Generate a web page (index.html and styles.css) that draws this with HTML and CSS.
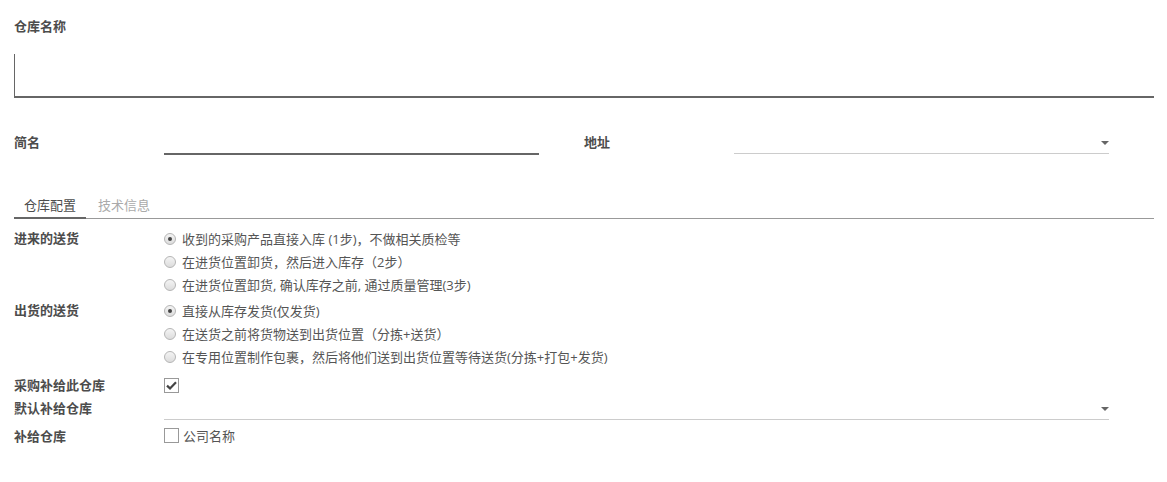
FILE: index.html
```html
<!DOCTYPE html>
<html lang="zh-CN">
<head>
    <meta charset="UTF-8">
    <title>仓库</title>
    <link rel="stylesheet" href="styles.css">
</head>
<body>
    <div class="sheet">
        <div class="title-label">仓库名称</div>
        <div class="title-input"></div>

        <div class="pair-row">
            <div class="pair">
                <div class="label">简名</div>
                <div class="field field-dark"></div>
            </div>
            <div class="pair">
                <div class="label">地址</div>
                <div class="field field-select"><span class="caret"></span></div>
            </div>
        </div>

        <div class="tabs">
            <div class="tab active">仓库配置</div>
            <div class="tab">技术信息</div>
        </div>

        <div class="group incoming">
            <div class="label">进来的送货</div>
            <div class="options">
                <div class="option"><span class="radio checked"></span>收到的采购产品直接入库 (1步)，不做相关质检等</div>
                <div class="option"><span class="radio"></span>在进货位置卸货，然后进入库存（2步）</div>
                <div class="option"><span class="radio"></span>在进货位置卸货, 确认库存之前, 通过质量管理(3步)</div>
            </div>
        </div>

        <div class="group outgoing">
            <div class="label">出货的送货</div>
            <div class="options">
                <div class="option"><span class="radio checked"></span>直接从库存发货(仅发货)</div>
                <div class="option"><span class="radio"></span>在送货之前将货物送到出货位置（分拣+送货）</div>
                <div class="option"><span class="radio"></span>在专用位置制作包裹，然后将他们送到出货位置等待送货(分拣+打包+发货)</div>
            </div>
        </div>

        <div class="group check-row buy-row">
            <div class="label">采购补给此仓库</div>
            <div class="options">
                <span class="checkbox">
                    <svg width="11" height="9" viewBox="0 0 11 9"><path d="M1 4.6 L4 7.4 L10 1.2" fill="none" stroke="#444" stroke-width="2.2"/></svg>
                </span>
            </div>
        </div>

        <div class="label default-label">默认补给仓库</div>
        <div class="group default-row">
            <div class="field field-select wide"><span class="caret"></span></div>
        </div>

        <div class="group check-row resupply-row">
            <div class="label">补给仓库</div>
            <div class="options"><span class="checkbox"></span>公司名称</div>
        </div>
    </div>
</body>
</html>
```

FILE: styles.css
```css
body {
    margin: 0;
    font-family: "Open Sans", "Noto Sans CJK SC", sans-serif;
    font-size: 13px;
    color: #4c4c4c;
    background: #ffffff;
}
.sheet {
    width: 1140px;
    padding: 17px 0 0 14px;
}
.title-label {
    font-weight: bold;
    line-height: 18px;
}
.title-input {
    margin-top: 19px;
    height: 42px;
    border-left: 1px solid #666666;
    border-bottom: 2px solid #666666;
}
.label {
    font-weight: bold;
    width: 150px;
    flex-shrink: 0;
    line-height: 18px;
}
.pair-row {
    display: flex;
    gap: 45px;
    margin-top: 35px;
}
.pair {
    display: flex;
}
.field {
    width: 375px;
    height: 20px;
    position: relative;
}
.field-dark {
    border-bottom: 2px solid #666666;
}
.field-select {
    border-bottom: 1px solid #cccccc;
}
.caret {
    position: absolute;
    right: 0;
    top: 8px;
    width: 0;
    height: 0;
    border-left: 4px solid transparent;
    border-right: 4px solid transparent;
    border-top: 4px solid #666666;
}
.tabs {
    display: flex;
    margin-top: 41px;
    border-bottom: 1px solid #999999;
}
.tab {
    padding: 0 10px 3px;
    line-height: 18px;
    color: #aaaaaa;
}
.tab.active {
    color: #4c4c4c;
    border-bottom: 2px solid #666666;
    margin-bottom: -1px;
}
.tab + .tab {
    padding-left: 12px;
}
.group {
    display: flex;
}
.incoming {
    margin-top: 10px;
}
.outgoing {
    margin-top: 5px;
}
.options {
    display: flex;
    flex-direction: column;
    color: #555555;
}
.option {
    display: flex;
    align-items: center;
    height: 23px;
    line-height: 18px;
}
.option:first-child {
    margin-top: -2px;
}
.radio {
    width: 12px;
    height: 12px;
    box-sizing: border-box;
    border: 1px solid #b5b5b5;
    border-radius: 50%;
    background: linear-gradient(#f4f4f4, #dcdcdc);
    margin-right: 6px;
    position: relative;
}
.radio.checked::after {
    content: "";
    position: absolute;
    left: 3px;
    top: 3px;
    width: 4px;
    height: 4px;
    border-radius: 50%;
    background: #444444;
}
.check-row {
    align-items: center;
}
.check-row .options {
    flex-direction: row;
    align-items: center;
}
.buy-row {
    margin-top: 8px;
}
.resupply-row {
    margin-top: 6px;
}
.checkbox {
    width: 15px;
    height: 15px;
    box-sizing: border-box;
    border: 1px solid #999999;
    display: inline-flex;
    align-items: center;
    justify-content: center;
    margin-right: 4px;
}
.default-label {
    margin-top: 5px;
}
.default-row {
    padding-left: 150px;
    margin-top: -4px;
}
.field.wide {
    width: 945px;
    height: 6px;
}
.default-row .caret {
    top: -6px;
}
```
